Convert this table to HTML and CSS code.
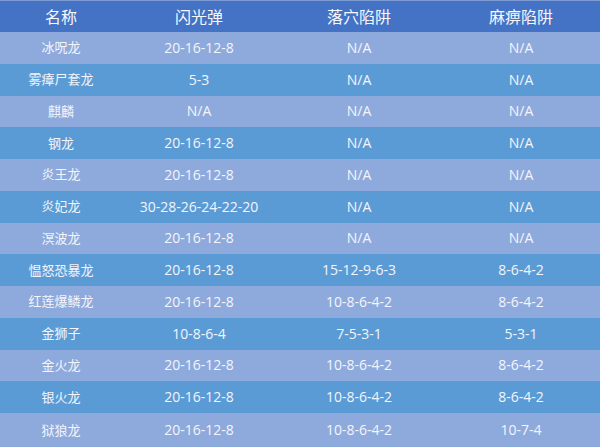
FILE: index.html
```html
<!DOCTYPE html>
<html lang="zh-CN">
<head>
<meta charset="utf-8">
<title>陷阱表</title>
<link rel="stylesheet" href="styles.css">
</head>
<body>
<div class="table">
  <div class="row head"><div>名称</div><div>闪光弹</div><div>落穴陷阱</div><div>麻痹陷阱</div></div>
  <div class="row light"><div class="name">冰呪龙</div><div>20-16-12-8</div><div>N/A</div><div>N/A</div></div>
  <div class="row dark"><div class="name">雾瘴尸套龙</div><div>5-3</div><div>N/A</div><div>N/A</div></div>
  <div class="row light"><div class="name">麒麟</div><div>N/A</div><div>N/A</div><div>N/A</div></div>
  <div class="row dark"><div class="name">钢龙</div><div>20-16-12-8</div><div>N/A</div><div>N/A</div></div>
  <div class="row light"><div class="name">炎王龙</div><div>20-16-12-8</div><div>N/A</div><div>N/A</div></div>
  <div class="row dark"><div class="name">炎妃龙</div><div>30-28-26-24-22-20</div><div>N/A</div><div>N/A</div></div>
  <div class="row light"><div class="name">溟波龙</div><div>20-16-12-8</div><div>N/A</div><div>N/A</div></div>
  <div class="row dark"><div class="name">愠怒恐暴龙</div><div>20-16-12-8</div><div>15-12-9-6-3</div><div>8-6-4-2</div></div>
  <div class="row light"><div class="name">红莲爆鳞龙</div><div>20-16-12-8</div><div>10-8-6-4-2</div><div>8-6-4-2</div></div>
  <div class="row dark"><div class="name">金狮子</div><div>10-8-6-4</div><div>7-5-3-1</div><div>5-3-1</div></div>
  <div class="row light"><div class="name">金火龙</div><div>20-16-12-8</div><div>10-8-6-4-2</div><div>8-6-4-2</div></div>
  <div class="row dark"><div class="name">银火龙</div><div>20-16-12-8</div><div>10-8-6-4-2</div><div>8-6-4-2</div></div>
  <div class="row light last"><div class="name">狱狼龙</div><div>20-16-12-8</div><div>10-8-6-4-2</div><div>10-7-4</div></div>
</div>
</body>
</html>
```

FILE: styles.css
```css
html, body {
  margin: 0;
  padding: 0;
}
body {
  width: 600px;
  height: 447px;
  overflow: hidden;
  background: #8eaadc;
  font-family: "Open Sans", "Noto Sans CJK SC", sans-serif;
  color: #f2f5fb;
}
.table {
  display: flex;
  flex-direction: column;
}
.row {
  display: grid;
  grid-template-columns: 122px 154px 166px 158px;
  height: 31.75px;
  align-items: center;
  font-size: 14px;
}
.row > div {
  text-align: center;
  line-height: 1;
  white-space: nowrap;
}
.row .name {
  font-size: 13px;
}
.head {
  height: 32px;
  background: #4472c4;
  font-size: 16px;
  color: #f6f8fd;
  border-top: 1px solid #7e9bd4;
  box-sizing: border-box;
}
.light {
  background: #8eaadc;
}
.dark {
  background: #5b9bd5;
}
.last {
  height: 34px;
}
```
